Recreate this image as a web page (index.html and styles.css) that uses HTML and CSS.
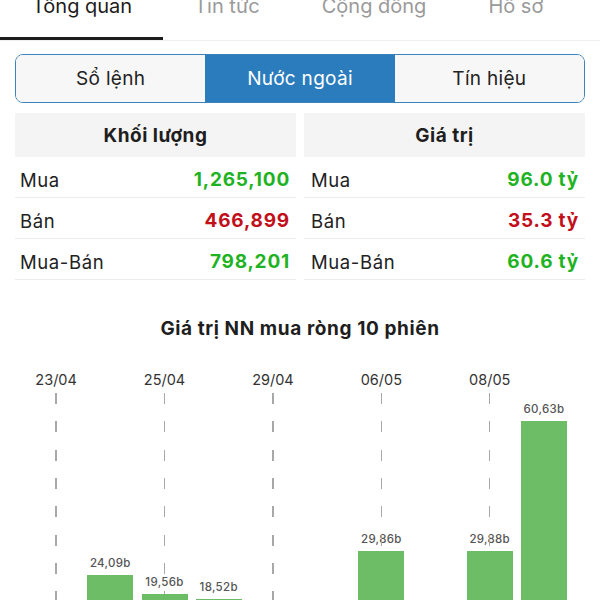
FILE: index.html
```html
<!DOCTYPE html>
<html lang="vi">
<head>
    <meta charset="UTF-8">
    <meta name="viewport" content="width=device-width, initial-scale=1.0">
    <title>Nước ngoài</title>
    <link rel="stylesheet" href="styles.css">
</head>
<body>
    <div class="tabs">
        <div class="tab active">Tổng quan</div>
        <div class="tab">Tin tức</div>
        <div class="tab">Cộng đồng</div>
        <div class="tab">Hồ sơ</div>
    </div>

    <div class="segment">
        <div class="seg">Sổ lệnh</div>
        <div class="seg active">Nước ngoài</div>
        <div class="seg">Tín hiệu</div>
    </div>

    <div class="stats">
        <div class="panel">
            <div class="panel-head">Khối lượng</div>
            <div class="row"><span>Mua</span><span class="val up">1,265,100</span></div>
            <div class="row"><span>Bán</span><span class="val down">466,899</span></div>
            <div class="row"><span>Mua-Bán</span><span class="val up">798,201</span></div>
        </div>
        <div class="panel">
            <div class="panel-head">Giá trị</div>
            <div class="row"><span>Mua</span><span class="val up">96.0 tỷ</span></div>
            <div class="row"><span>Bán</span><span class="val down">35.3 tỷ</span></div>
            <div class="row"><span>Mua-Bán</span><span class="val up">60.6 tỷ</span></div>
        </div>
    </div>

    <div class="chart-title">Giá trị NN mua ròng 10 phiên</div>
    <div class="chart" id="chart"></div>

    <script>
        let sessions = [
            { date: '23/04', value: 6.14 },
            { date: '24/04', value: 24.09 },
            { date: '25/04', value: 19.56 },
            { date: '26/04', value: 18.52 },
            { date: '29/04', value: 9.87 },
            { date: '02/05', value: 3.21 },
            { date: '06/05', value: 29.86 },
            { date: '07/05', value: 12.4 },
            { date: '08/05', value: 29.88 },
            { date: '09/05', value: 60.63 }
        ];
        let chart = document.getElementById('chart');
        let scale = 4.225;

        sessions.forEach((s, i) => {
            let col = document.createElement('div');
            col.className = 'col';

            let date = document.createElement('div');
            date.className = 'date';
            // only every other session gets a date and a guide line
            let labelled = i % 2 === 0;
            date.textContent = labelled ? s.date : '';
            col.appendChild(date);

            let plot = document.createElement('div');
            plot.className = labelled ? 'plot guide' : 'plot';

            let label = document.createElement('div');
            label.className = 'bar-label';
            label.textContent = s.value.toFixed(2).replace('.', ',') + 'b';

            let bar = document.createElement('div');
            bar.className = 'bar';
            bar.style.height = (s.value * scale) + 'px';

            plot.appendChild(label);
            plot.appendChild(bar);
            col.appendChild(plot);
            chart.appendChild(col);
        });
    </script>
</body>
</html>
```

FILE: styles.css
```css
body {
    margin: 0;
    padding: 0;
    overflow: hidden;
    background: #fff;
    color: #222;
    font-family: Inter, "Noto Sans", sans-serif;
}

.tabs {
    display: flex;
    margin-top: -6px;
    border-bottom: 1px solid #f0f0f0;
}

.tab {
    padding: 0 31px 19px;
    font-size: 20px;
    line-height: 24px;
    color: #9a9a9a;
    border-bottom: 3px solid transparent;
}

.tab.active {
    padding-left: 32px;
    color: #1c1c1c;
    border-bottom-color: #1c1c1c;
}

.segment {
    display: flex;
    margin: 13px 15px 0;
    height: 49px;
    box-sizing: border-box;
    border: 1.5px solid #3d83ba;
    border-radius: 8px;
    overflow: hidden;
}

.seg {
    flex: 1;
    display: flex;
    justify-content: center;
    align-items: center;
    background: #f7f7f7;
    font-size: 19px;
    letter-spacing: 0.3px;
    color: #222;
}

.seg.active {
    background: #2a7cbc;
    color: #fff;
}

.stats {
    display: grid;
    grid-template-columns: 1fr 1fr;
    gap: 8px;
    margin: 10px 15px 0;
}

.panel-head {
    height: 44px;
    display: flex;
    justify-content: center;
    align-items: center;
    background: #f4f4f4;
    font-size: 19px;
    letter-spacing: 0.5px;
    font-weight: 700;
    color: #1e1e1e;
}

.row {
    height: 41px;
    box-sizing: border-box;
    padding: 5px 6px 0 5px;
    display: flex;
    justify-content: space-between;
    align-items: center;
    border-bottom: 1px solid #ececec;
    font-size: 18.5px;
    letter-spacing: 0.6px;
    color: #222;
}

.panel + .panel .row {
    padding-left: 7px;
}

.val {
    font-size: 19px;
    font-weight: 700;
    letter-spacing: 0.8px;
}

.up {
    color: #1fb324;
}

.down {
    color: #c2101b;
}

.chart-title {
    margin-top: 38px;
    text-align: center;
    font-size: 19px;
    line-height: 22px;
    letter-spacing: 0.6px;
    font-weight: 700;
    color: #1e1e1e;
}

.chart {
    display: flex;
    padding: 0 29px;
    margin-top: 30px;
}

.col {
    flex: 1;
    display: flex;
    flex-direction: column;
    align-items: center;
}

.date {
    height: 20px;
    line-height: 20px;
    margin-bottom: 3px;
    font-size: 14.5px;
    color: #333;
}

.plot {
    position: relative;
    width: 100%;
    height: 284px;
    display: flex;
    flex-direction: column;
    justify-content: flex-end;
    align-items: center;
}

.guide::before {
    content: '';
    position: absolute;
    top: 0;
    bottom: 0;
    left: 50%;
    width: 1.5px;
    margin-left: -0.75px;
    background: repeating-linear-gradient(to bottom, #a8a8a8 0, #a8a8a8 11px, transparent 11px, transparent 28.33px);
    z-index: 1;
}

.bar-label {
    font-size: 11.5px;
    line-height: 14px;
    margin-bottom: 5px;
    font-weight: 500;
    letter-spacing: 0.3px;
    color: #555;
}

.bar {
    position: relative;
    z-index: 2;
    width: 46px;
    background: #6dbd67;
}
```
